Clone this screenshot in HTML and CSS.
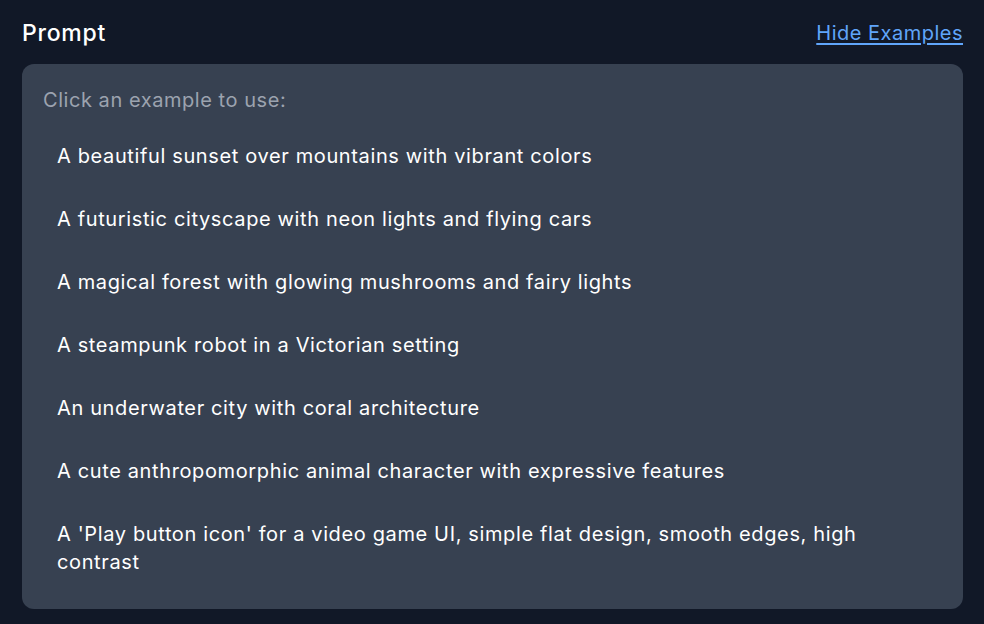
FILE: index.html
```html
<!DOCTYPE html>
<html>
<head>
<meta charset="utf-8">
<link rel="stylesheet" href="styles.css">
</head>
<body>
<div class="wrap">
  <div class="head">
    <span class="label">Prompt</span>
    <a class="toggle" href="#">Hide Examples</a>
  </div>
  <div class="card">
    <div class="hint">Click an example to use:</div>
    <ul class="list">
      <li class="item">A beautiful sunset over mountains with vibrant colors</li>
      <li class="item">A futuristic cityscape with neon lights and flying cars</li>
      <li class="item">A magical forest with glowing mushrooms and fairy lights</li>
      <li class="item">A steampunk robot in a Victorian setting</li>
      <li class="item">An underwater city with coral architecture</li>
      <li class="item">A cute anthropomorphic animal character with expressive features</li>
      <li class="item">A 'Play button icon' for a video game UI, simple flat design, smooth edges, high contrast</li>
    </ul>
  </div>
</div>
</body>
</html>
```
FILE: styles.css
```css
html, body {
  margin: 0;
  padding: 0;
  background: #111827;
  font-family: Inter, "Noto Sans", sans-serif;
}
.wrap {
  padding: 16px 21px 15px 22px;
}
.head {
  display: flex;
  justify-content: space-between;
  align-items: center;
  height: 34px;
  margin-bottom: 14px;
}
.label {
  color: #ffffff;
  font-size: 23px;
  font-weight: 500;
  letter-spacing: 0.75px;
}
.toggle {
  color: #60a5fa;
  font-size: 20px;
  letter-spacing: 0.5px;
  text-decoration: underline;
  text-underline-offset: 3px;
}
.card {
  background: #374151;
  border-radius: 12px;
  padding: 21px 21px 21px 21px;
}
.hint {
  color: #9ca3af;
  font-size: 20px;
  letter-spacing: 0.55px;
  line-height: 30px;
  margin-bottom: 15px;
}
.list {
  list-style: none;
  margin: 0;
  padding: 0;
  display: flex;
  flex-direction: column;
  gap: 11px;
}
.item {
  color: #ffffff;
  font-size: 20px;
  letter-spacing: 0.63px;
  line-height: 28px;
  padding: 12px 14px;
  border-radius: 8px;
}
```
